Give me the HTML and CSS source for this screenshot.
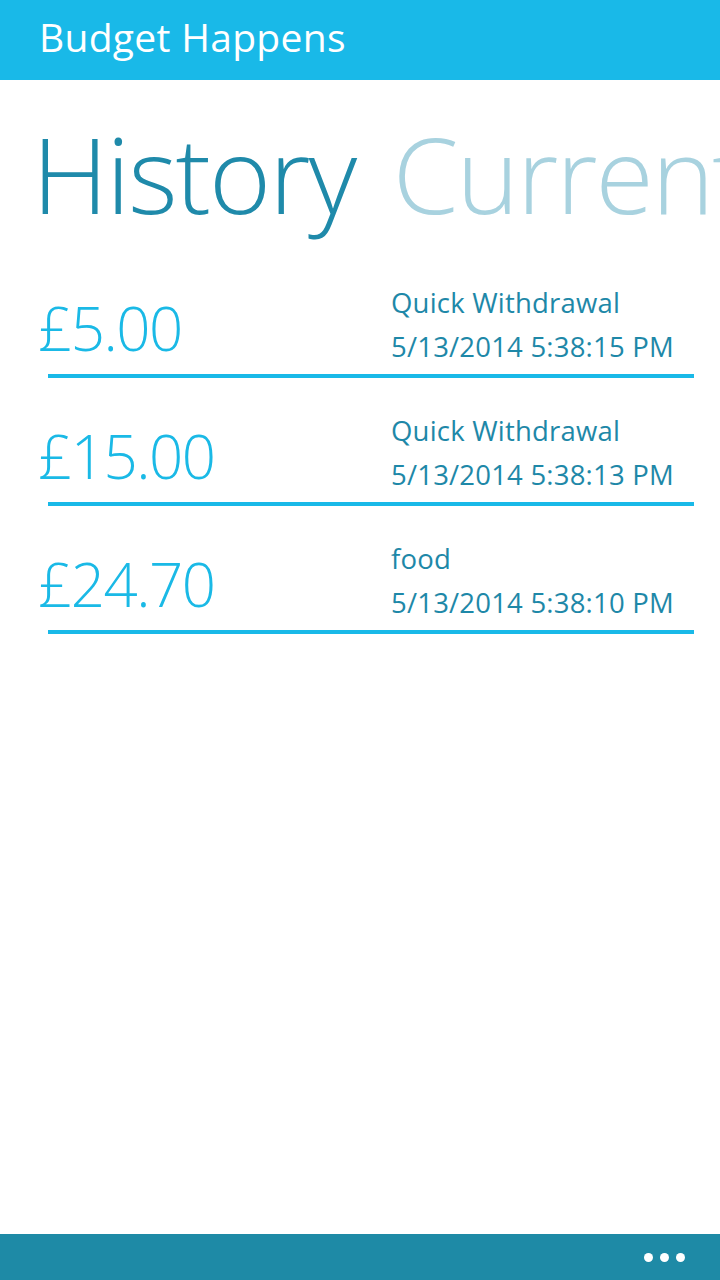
FILE: index.html
```html
<!DOCTYPE html>
<html>
<head>
<meta charset="utf-8">
<link rel="stylesheet" href="styles.css">
</head>
<body>
<div class="app">
  <header class="titlebar"><span class="apptitle">Budget Happens</span></header>
  <div class="pivot">
    <span class="pivot-active">History</span> <span class="pivot-next">Current</span>
  </div>
  <ul class="list">
    <li class="row">
      <div class="amount">£5.00</div>
      <div class="details">
        <div class="desc">Quick Withdrawal</div>
        <div class="date">5/13/2014 5:38:15 PM</div>
      </div>
    </li>
    <li class="row">
      <div class="amount">£15.00</div>
      <div class="details">
        <div class="desc">Quick Withdrawal</div>
        <div class="date">5/13/2014 5:38:13 PM</div>
      </div>
    </li>
    <li class="row">
      <div class="amount">£24.70</div>
      <div class="details">
        <div class="desc">food</div>
        <div class="date">5/13/2014 5:38:10 PM</div>
      </div>
    </li>
  </ul>
  <footer class="appbar">
    <div class="more"><span class="dot"></span><span class="dot"></span><span class="dot"></span></div>
  </footer>
</div>
</body>
</html>
```
FILE: styles.css
```css
html, body {
  margin: 0;
  padding: 0;
  background: #ffffff;
}
.app {
  width: 720px;
  height: 1280px;
  display: flex;
  flex-direction: column;
  overflow: hidden;
  font-family: "Open Sans", "Noto Sans", sans-serif;
}
.titlebar {
  height: 80px;
  flex: none;
  background: #19b9e8;
  display: flex;
  align-items: center;
  padding-left: 39px;
  box-sizing: border-box;
}
.apptitle {
  color: #ffffff;
  font-size: 39px;
  line-height: 1;
  margin-top: -8px;
  letter-spacing: 0.3px;
}
.pivot {
  flex: none;
  white-space: nowrap;
  overflow: hidden;
  font-size: 106px;
  font-weight: 300;
  line-height: 1;
  padding-left: 32px;
  margin-top: 40px;
  height: 130px;
  letter-spacing: -2px;
  word-spacing: 12px;
}
.pivot-active { color: #1f8aaa; }
.pivot-next { color: #a8d2df; }
.list {
  list-style: none;
  margin: 0;
  padding: 0;
  flex: none;
}
.row {
  display: flex;
  align-items: flex-end;
  height: 124px;
  margin: 0 26px 0 48px;
  border-bottom: 4px solid #19b9e8;
  box-sizing: content-box;
}
.amount {
  width: 353px;
  flex: none;
  margin-left: -10px;
  color: #1ab9e6;
  font-size: 60px;
  font-weight: 300;
  line-height: 60px;
  padding-bottom: 16px;
  letter-spacing: -1.5px;
}
.details {
  color: #1e88a8;
  font-size: 27.5px;
  line-height: 44px;
  padding-bottom: 5px;
  letter-spacing: 0.2px;
}
.appbar {
  margin-top: auto;
  height: 46px;
  flex: none;
  background: #1e8aa6;
  display: flex;
  justify-content: flex-end;
  align-items: center;
  padding-right: 35px;
}
.more {
  display: flex;
  gap: 7px;
}
.dot {
  width: 9px;
  height: 9px;
  border-radius: 50%;
  background: #ffffff;
}
```
